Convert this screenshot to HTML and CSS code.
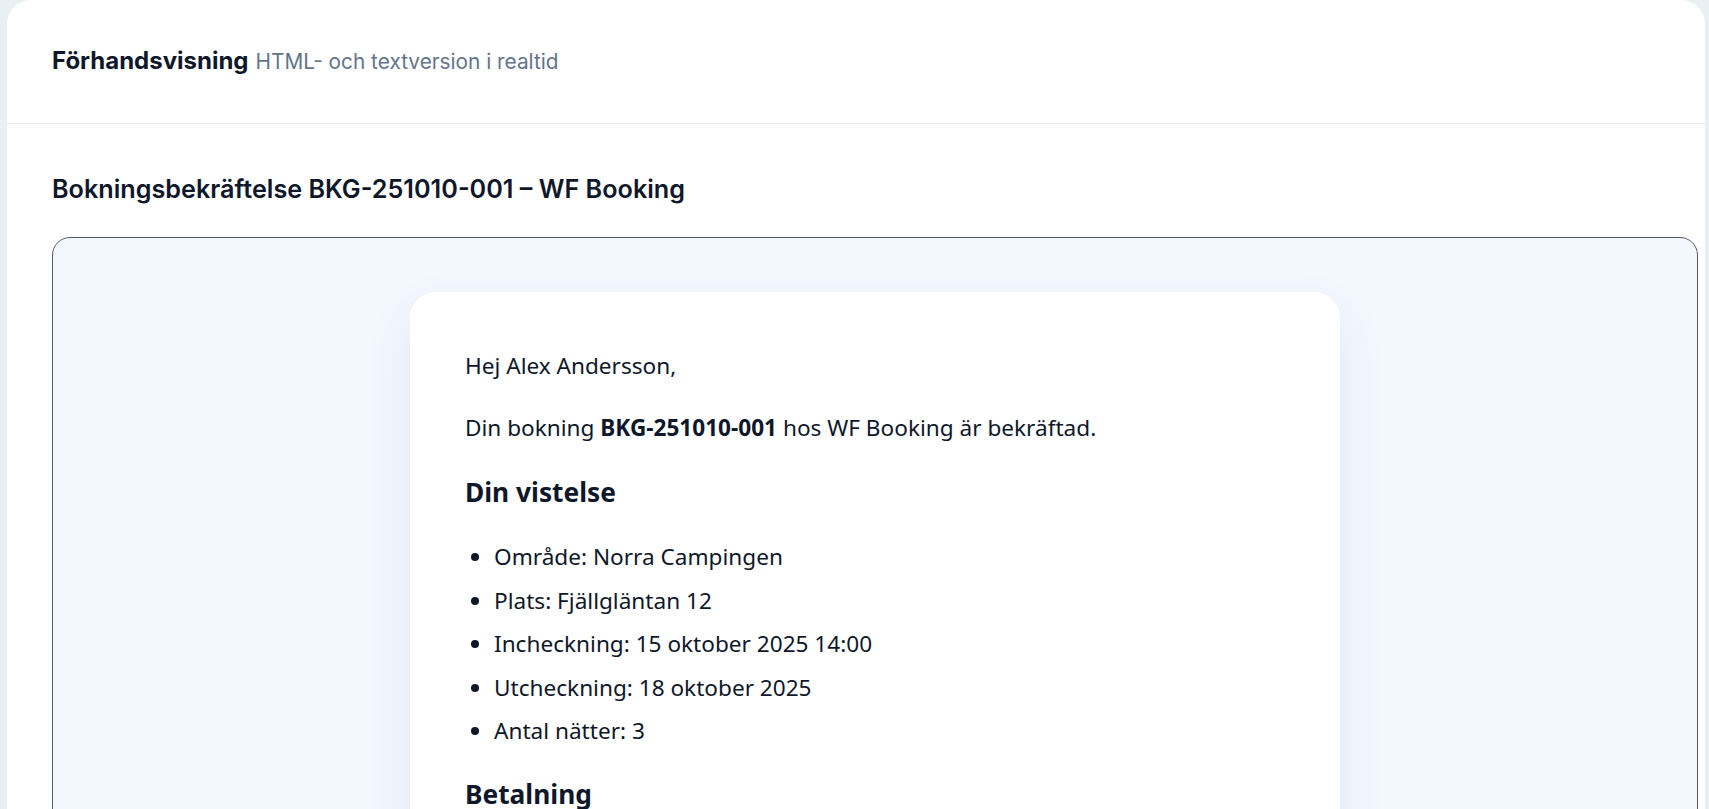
FILE: index.html
```html
<!DOCTYPE html>
<html lang="sv">
<head>
<meta charset="utf-8">
<title>Förhandsvisning</title>
<link rel="stylesheet" href="styles.css">
</head>
<body>
<main class="panel">
  <header class="panel-head">
    <h1 class="panel-title">Förhandsvisning</h1>
    <span class="panel-sub">HTML- och textversion i realtid</span>
  </header>
  <section class="panel-body">
    <h2 class="subject">Bokningsbekräftelse BKG-251010-001 – WF Booking</h2>
    <div class="frame">
      <article class="mail">
        <p>Hej Alex Andersson,</p>
        <p>Din bokning <strong>BKG-251010-001</strong> hos WF Booking är bekräftad.</p>
        <h3>Din vistelse</h3>
        <ul>
          <li>Område: Norra Campingen</li>
          <li>Plats: Fjällgläntan 12</li>
          <li>Incheckning: 15 oktober 2025 14:00</li>
          <li>Utcheckning: 18 oktober 2025</li>
          <li>Antal nätter: 3</li>
        </ul>
        <h3>Betalning</h3>
        <ul>
          <li>Totalt: 2 850 kr</li>
        </ul>
      </article>
    </div>
  </section>
</main>
</body>
</html>
```
FILE: styles.css
```css
html, body {
  margin: 0;
  padding: 0;
  height: 100%;
  overflow: hidden;
}
body {
  background: #e9f0f4;
  font-family: Inter, "Noto Sans", sans-serif;
  color: #0f172a;
}
.panel {
  margin: 0 4px 0 7px;
  background: #ffffff;
  border-radius: 24px 24px 0 0;
  min-height: 100%;
}
.panel-head {
  display: flex;
  align-items: baseline;
  gap: 7px;
  height: 124px;
  box-sizing: border-box;
  padding: 46px 45px 0;
  border-bottom: 1px solid #e8ecf0;
}
.panel-title {
  margin: 0;
  font-size: 24px;
  font-weight: 700;
  line-height: 30px;
  color: #0f172a;
}
.panel-sub {
  font-size: 20.8px;
  color: #64748b;
}
.panel-body {
  padding: 50px 7px 0 45px;
}
.subject {
  margin: 0 0 33px;
  font-size: 25.2px;
  font-weight: 600;
  line-height: 30px;
  color: #0f172a;
}
.frame {
  border: 1px solid #585a63;
  border-radius: 18px;
  background: #f3f7fe;
  padding: 54px 0 40px;
  display: flex;
  justify-content: center;
}
.mail {
  width: 930px;
  box-sizing: border-box;
  background: #ffffff;
  border-radius: 26px;
  padding: 58px 55px 40px;
  box-shadow: 0 20px 50px rgba(30, 64, 175, 0.08);
  font-family: "Noto Sans", sans-serif;
  font-size: 22.6px;
  line-height: 32px;
  color: #0f172a;
}
.mail p {
  margin: 0 0 30px;
}
.mail h3 {
  margin: 3px 0 31px;
  font-size: 26.3px;
  line-height: 36px;
  font-weight: 700;
}
.mail ul + h3 {
  margin-top: 29px;
}
.mail ul {
  margin: 0;
  padding-left: 29px;
}
.mail li {
  margin-bottom: 11.6px;
}
.mail li:last-child {
  margin-bottom: 0;
}
```
